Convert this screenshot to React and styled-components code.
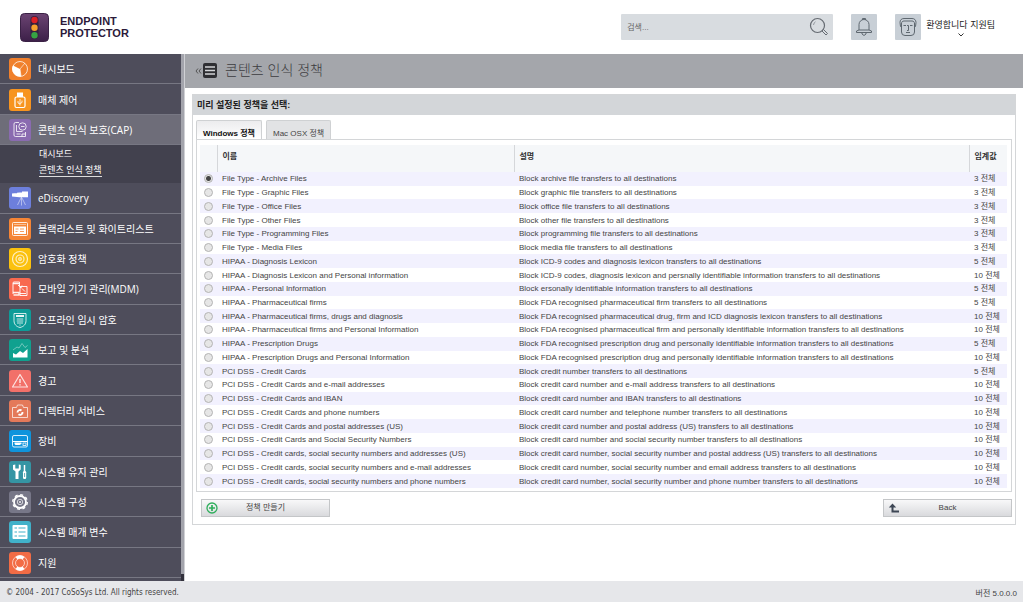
import React, { useState } from 'react'
import styled, { createGlobalStyle } from 'styled-components'

const sans = '"Liberation Sans", "Noto Sans CJK KR", sans-serif'
const menuFont = '"Open Sans", "Noto Sans CJK KR", sans-serif'

const GlobalStyle = createGlobalStyle`
	* { box-sizing: border-box; }
	body {
		margin: 0;
		background: #fff;
		color: #444;
		font-family: ${sans};
		font-size: 8px;
	}
	button, input { font-family: inherit; }
`

/* Menu icons, drawn on a 22 x 22 tile */
const icons = {
	dashboard: (
		<>
			<circle cx="11" cy="11" r="7.5" fill="none" stroke="#fff" strokeOpacity=".75" />
			<path d="M11 11 4 7.5A7.8 7.8 0 0 0 12 18.5Z" fill="#fff" />
			<path d="M11 11 16 5M11 11l1 7" stroke="#fff" strokeOpacity=".6" fill="none" />
		</>
	),
	device: (
		<>
			<path d="M8 3.5h6V8H8z" fill="#fff" />
			<rect x="6" y="8" width="10" height="10.5" rx="1.5" fill="none" stroke="#fff" strokeWidth="1.2" />
			<path d="M11 10v6.5M9 12v2l2 1M13 11.5v2l-2 1" fill="none" stroke="#fff" strokeWidth=".8" />
		</>
	),
	cap: (
		<g fill="none" stroke="#fff" strokeOpacity=".8">
			<path d="M10 3.5H6.5A1.5 1.5 0 0 0 5 5v11a1.5 1.5 0 0 0 1.5 1.5h10V13" />
			<circle cx="13.5" cy="7.5" r="3.7" />
			<path d="M12 7.5h3.5M7.5 6v6.5h6M7.5 15h4M13 17.5V15h3.5" />
		</g>
	),
	discovery: (
		<>
			<path d="M3 6.5 8 6v4L3 9.5zM8 5.7 13 5.2v5.2L8 9.9zM13 4.5h6v5.8h-6z" fill="#fff" />
			<path d="M12.5 10v8.5M12 11l-3.5 7M13 11l3.5 7" stroke="#fff" strokeOpacity=".6" strokeWidth=".8" />
		</>
	),
	lists: (
		<>
			<rect x="3.5" y="4.5" width="15" height="13" rx="1" fill="none" stroke="#fff" strokeOpacity=".85" />
			<path d="M5 8.5h12V16H5z" fill="#fff" />
			<path d="M6.5 11h3M11 11h4M6.5 13.5h2M11 13.5h4" stroke="#f7a063" />
			<path d="M5 6.5h12" stroke="#fff" strokeOpacity=".6" strokeWidth=".8" />
		</>
	),
	encryption: (
		<g fill="none" stroke="#fff" strokeOpacity=".75" strokeWidth="1.2">
			<circle cx="11" cy="11" r="7.5" />
			<circle cx="11" cy="11" r="4" />
			<circle cx="11" cy="11" r="1.3" />
		</g>
	),
	mobile: (
		<g fill="none" stroke="#fff" strokeOpacity=".9">
			<path d="M4 16V5a1 1 0 0 1 1-1h5.5v4" />
			<path d="M4 5.5h6.5M4 14.5h6V17H4.5" strokeWidth="1.4" />
			<path d="M11 8.5h7v9h-7z" />
			<path d="m9 7 3 3m0 0 1-2.5M11 15.5h6M13 10.5l3 3" />
		</g>
	),
	offline: (
		<>
			<path d="M5 4.5h12v7c0 4-2.5 6.2-6 7-3.5-.8-6-3-6-7z" fill="none" stroke="#fff" strokeOpacity=".8" />
			<path d="M7 6h8v2H7z" fill="#fff" fillOpacity=".9" />
			<path d="M7.5 10h7M7.5 12h7M8 14h6M9 9v6M11 9v8M13 9v6" stroke="#fff" strokeOpacity=".55" strokeWidth=".8" />
		</>
	),
	reports: (
		<>
			<path d="M4 18.5V14l3 1.5 4-3.5 3 2 4.5-4v8.5z" fill="#fff" />
			<path d="m4 11 4-3 2 1 3-4.5 3 4 2.5-2" fill="none" stroke="#fff" strokeOpacity=".5" strokeWidth=".8" />
		</>
	),
	alerts: (
		<>
			<path d="M11 4.5 18.5 17h-15z" fill="none" stroke="#fff" strokeOpacity=".8" strokeWidth="1.2" strokeLinejoin="round" />
			<path d="M11 9v4M11 14.3v1.2" stroke="#fff" strokeWidth="1.2" />
		</>
	),
	directory: (
		<>
			<path d="M3.5 7.5h4l1-2.5h5l1 2.5h4v10h-15z" fill="none" stroke="#fff" strokeOpacity=".7" strokeLinejoin="round" />
			<path d="M8.5 12.5a2.5 2.5 0 0 1 4-2M13.5 12a2.5 2.5 0 0 1-4 2.3" fill="none" stroke="#fff" strokeWidth="1.9" />
		</>
	),
	appliance: (
		<>
			<rect x="3.5" y="5.5" width="15" height="11.5" rx="1.5" fill="none" stroke="#fff" strokeOpacity=".85" />
			<path d="M4 11.5h14" stroke="#fff" />
			<path d="M5.5 12.5h7V14l-2 1h-4l-1-1z" fill="#fff" />
			<rect x="14" y="13" width="3" height="2.5" fill="none" stroke="#fff" strokeWidth=".8" />
		</>
	),
	maintenance: (
		<>
			<path d="M4 4v4.5l2.5 2V18h3v-7.5l2.2-2V4L9.8 3.5v4H6.3v-4z" fill="#fff" />
			<path d="M15.5 4v6" stroke="#fff" strokeWidth="1.5" />
			<rect x="14" y="10" width="3.2" height="8" rx="1.2" fill="#fff" />
			<path d="M15.6 12v4" stroke="#3595a4" strokeWidth=".8" />
		</>
	),
	config: (
		<g fill="none" stroke="#fff">
			<circle cx="11" cy="11" r="6" strokeWidth="1.8" />
			<circle cx="11" cy="11" r="7.3" strokeWidth="1.3" strokeDasharray="3 2.733" />
			<circle cx="11" cy="11" r="2.7" strokeOpacity=".7" />
			<circle cx="11" cy="11" r=".5" fill="#fff" />
		</g>
	),
	params: (
		<>
			<rect x="3.5" y="4" width="15" height="14" rx="1" fill="#fff" />
			<path d="M5.5 7H8M5.5 11H8M5.5 15H8M9.5 7h7M9.5 11h7M9.5 15h7" stroke="#41b1c9" strokeWidth="1.2" />
		</>
	),
	// the thick bands sit at the top and bottom of the ring
	support: (
		<g fill="none" stroke="#fff">
			<circle cx="11" cy="11" r="7.5" strokeOpacity=".8" strokeWidth=".8" />
			<circle cx="11" cy="11" r="4.5" strokeOpacity=".8" strokeWidth=".8" />
			<path d="M7.5 6.2a6 6 0 0 1 7 0M7.5 15.8a6 6 0 0 0 7 0" strokeWidth="3.2" />
		</g>
	),
}

const menu = [
	{ icon: 'dashboard', label: '대시보드', color: '#f0802c' },
	{ icon: 'device', label: '매체 제어', color: '#f7941f' },
	{ icon: 'cap', label: '콘텐츠 인식 보호(CAP)', color: '#8a6bb0', active: true },
	{ icon: 'discovery', label: 'eDiscovery', color: '#6d7fdc' },
	{ icon: 'lists', label: '블랙리스트 및 화이트리스트', color: '#f58536' },
	{ icon: 'encryption', label: '암호화 정책', color: '#fbc10e' },
	{ icon: 'mobile', label: '모바일 기기 관리(MDM)', color: '#f8694f' },
	{ icon: 'offline', label: '오프라인 임시 암호', color: '#0e9c98' },
	{ icon: 'reports', label: '보고 및 분석', color: '#10a18f' },
	{ icon: 'alerts', label: '경고', color: '#f27069' },
	{ icon: 'directory', label: '디렉터리 서비스', color: '#e4795a' },
	{ icon: 'appliance', label: '장비', color: '#0f94dc' },
	{ icon: 'maintenance', label: '시스템 유지 관리', color: '#3595a4' },
	{ icon: 'config', label: '시스템 구성', color: '#777788' },
	{ icon: 'params', label: '시스템 매개 변수', color: '#41b1c9' },
	{ icon: 'support', label: '지원', color: '#f26c45' },
]

const policies = [
	['File Type - Archive Files', 'Block archive file transfers to all destinations', 3],
	['File Type - Graphic Files', 'Block graphic file transfers to all destinations', 3],
	['File Type - Office Files', 'Block office file transfers to all destinations', 3],
	['File Type - Other Files', 'Block other file transfers to all destinations', 3],
	['File Type - Programming Files', 'Block programming file transfers to all destinations', 3],
	['File Type - Media Files', 'Block media file transfers to all destinations', 3],
	['HIPAA - Diagnosis Lexicon', 'Block ICD-9 codes and diagnosis lexicon transfers to all destinations', 5],
	['HIPAA - Diagnosis Lexicon and Personal information', 'Block ICD-9 codes, diagnosis lexicon and persnally identifiable information transfers to all destinations', 10],
	['HIPAA - Personal Information', 'Block ersonally identifiable information transfers to all destinations', 5],
	['HIPAA - Pharmaceutical firms', 'Block FDA recognised pharmaceutical firm transfers to all destinations', 5],
	['HIPAA - Pharmaceutical firms, drugs and diagnosis', 'Block FDA recognised pharmaceutical drug, firm and ICD diagnosis lexicon transfers to all destinations', 10],
	['HIPAA - Pharmaceutical firms and Personal Information', 'Block FDA recognised pharmaceutical firm and personally identifiable information transfers to all destinations', 10],
	['HIPAA - Prescription Drugs', 'Block FDA recognised prescription drug and personally identifiable information transfers to all destinations', 5],
	['HIPAA - Prescription Drugs and Personal Information', 'Block FDA recognised prescription drug and personally identifiable information transfers to all destinations', 10],
	['PCI DSS - Credit Cards', 'Block credit number transfers to all destinations', 5],
	['PCI DSS - Credit Cards and e-mail addresses', 'Block credit card number and e-mail address transfers to all destinations', 10],
	['PCI DSS - Credit Cards and IBAN', 'Block credit card number and IBAN transfers to all destinations', 10],
	['PCI DSS - Credit Cards and phone numbers', 'Block credit card number and telephone number transfers to all destinations', 10],
	['PCI DSS - Credit Cards and postal addresses (US)', 'Block credit card number and postal address (US) transfers to all destinations', 10],
	['PCI DSS - Credit Cards and Social Security Numbers', 'Block credit card number and social security number transfers to all destinations', 10],
	['PCI DSS - Credit cards, social security numbers and addresses (US)', 'Block credit card number, social security number and postal address (US) transfers to all destinations', 10],
	['PCI DSS - Credit cards, social security numbers and e-mail addresses', 'Block credit card number, social security number and email address transfers to all destinations', 10],
	['PCI DSS - Credit cards, social security numbers and phone numbers', 'Block credit card number, social security number and phone number transfers to all destinations', 10],
]

const Logo = () => (
	<svg width="29" height="29" viewBox="0 0 29 29" aria-hidden="true">
		<defs>
			<linearGradient id="logoFill" x1="0" y1="0" x2="0" y2="1">
				<stop offset="0" stopColor="#6b4472" />
				<stop offset="1" stopColor="#3c1f48" />
			</linearGradient>
		</defs>
		<rect x=".5" y=".5" width="28" height="28" rx="4" fill="url(#logoFill)" stroke="#3a2145" />
		<rect x="10.5" y="3" width="8" height="23" rx="4" fill="#35203f" />
		<circle cx="14.5" cy="7" r="3.2" fill="#dc1f26" />
		<circle cx="14.5" cy="14.7" r="3.2" fill="#f6a02d" />
		<circle cx="14.5" cy="22.3" r="3.2" fill="#36a343" />
	</svg>
)

const App = () => {
	const [tab, setTab] = useState('windows')
	const [selected, setSelected] = useState(0)

	return (
		<Page>
			<GlobalStyle />
			<Header>
				<Brand href="#">
					<Logo />
					<span>ENDPOINT<br />PROTECTOR</span>
				</Brand>
				<HeaderTools>
					<Search>
						<SearchInput type="text" placeholder="검색..." aria-label="검색" />
						<SearchButton aria-label="검색">
							<svg width="20" height="20" viewBox="0 0 20 20" fill="none" stroke="#666b72">
								<circle cx="8.5" cy="8.5" r="7" strokeWidth="1.2" />
								<path d="M4.500 8a4 4 0 0 1 2-3.200" strokeWidth=".6" />
								<path d="m13 14 1.500-1.500 4 4-1.500 1.500z" />
							</svg>
						</SearchButton>
					</Search>
					<IconButton aria-label="알림">
						<svg width="18" height="20" viewBox="0 0 18 20" fill="none" stroke="#5f6870">
							<path d="M7.5 3V1.500h3V3M4 13V7.500a5 5 0 0 1 10 0V13M1.500 15.500V14L4 13h10l2.500 1v1.500zM7 16v1l2 1.500 2-1.500v-1" strokeLinejoin="round" />
						</svg>
					</IconButton>
					<UserMenu>
						<Avatar>
							<svg width="20" height="20" viewBox="0 0 20 20" fill="none" stroke="#5f6870">
								<path d="M3.5 6v9A3.500 3.500 0 0 0 7 18.500h6a3.500 3.500 0 0 0 3.500-3.500V6" />
								<path d="M3.500 9.500H2.500L2 5.500c0-2.500 1.500-4 4-4h8c2.500 0 4 1.500 4 4l-.5 4h-1M3.500 6.500C3.500 5 4.500 4 6 4h8c1.500 0 2.500 1 2.500 2.500" />
								<path d="M5.500 8.500H8M12 8.500h2.500M9 8.500h1.500v5H9M8 15.500h4" />
							</svg>
						</Avatar>
						<UserName>
							환영합니다 지원팀
							<svg width="6" height="4" viewBox="0 0 6 4" fill="none" stroke="#333">
								<path d="m.5.5 2.500 2.500L5.500.5" />
							</svg>
						</UserName>
					</UserMenu>
				</HeaderTools>
			</Header>

			<Body>
				<Sidebar>
					{menu.map((item) => (
						<React.Fragment key={item.icon}>
							<MenuLink href="#" $active={item.active}>
								<Tile $color={item.color} viewBox="0 0 22 22" aria-hidden="true">{icons[item.icon]}</Tile>
								{item.label}
							</MenuLink>
							{item.active && (
								<SubMenu>
									<SubLink href="#">대시보드</SubLink>
									<SubLink href="#" $current>콘텐츠 인식 정책</SubLink>
								</SubMenu>
							)}
						</React.Fragment>
					))}
				</Sidebar>

				<Main>
					<TitleBar>
						<svg width="22" height="15" viewBox="0 0 22 15" aria-hidden="true">
							<path d="M3 5.500 1 8l2 2.500M6 5.500 4 8l2 2.500" fill="none" stroke="#555" />
							<rect x="8" width="14" height="15" rx="2" fill="#2f2f33" />
							<path d="M10 4h10M10 7.500h10M10 11h10" stroke="#d4d5d8" strokeWidth="1.500" />
						</svg>
						<Title>콘텐츠 인식 정책</Title>
					</TitleBar>

					<Panel>
						<PanelHead>미리 설정된 정책을 선택:</PanelHead>
						<PanelBody>
							<Tabs role="tablist">
								<Tab role="tab" aria-selected={tab === 'windows'} $active={tab === 'windows'} onClick={() => setTab('windows')}>
									Windows 정책
								</Tab>
								<Tab role="tab" aria-selected={tab === 'mac'} $active={tab === 'mac'} onClick={() => setTab('mac')}>
									Mac OSX 정책
								</Tab>
							</Tabs>
							<TabContent>
								<Table>
									<colgroup>
										<col style={{ width: 17 }} />
										<col style={{ width: 297 }} />
										<col />
										<col style={{ width: 38 }} />
									</colgroup>
									<thead>
										<tr>
											<HeadCell />
											<HeadCell>이름</HeadCell>
											<HeadCell>설명</HeadCell>
											<HeadCell>임계값</HeadCell>
										</tr>
									</thead>
									<tbody>
										{policies.map(([name, description, limit], i) => (
											<Row key={name}>
												<Cell $center>
													<Radio
														type="radio"
														name="policy"
														id={`policy-${i}`}
														checked={selected === i}
														onChange={() => setSelected(i)}
													/>
												</Cell>
												<Cell><label htmlFor={`policy-${i}`}>{name}</label></Cell>
												<Cell>{description}</Cell>
												<Cell>{limit} 전체</Cell>
											</Row>
										))}
									</tbody>
								</Table>
							</TabContent>
							<Actions>
								<ActionButton>
									<svg width="12" height="12" viewBox="0 0 12 12" fill="none" stroke="#2fae5c">
										<circle cx="6" cy="6" r="5" strokeWidth="1.3" />
										<path d="M6 3v6M3 6h6" strokeWidth="1.7" />
									</svg>
									<span>정책 만들기</span>
								</ActionButton>
								<ActionButton>
									<svg width="12" height="12" viewBox="0 0 12 12" fill="none" stroke="#3d4654">
										<path d="M4.500 4v5.500H11" strokeWidth="2" />
										<path d="M.8 5.500 4.500 1.500l3.700 4z" fill="#3d4654" stroke="none" />
									</svg>
									<span>Back</span>
								</ActionButton>
							</Actions>
						</PanelBody>
					</Panel>
				</Main>
			</Body>

			<Footer>
				<Copyright>© 2004 - 2017 CoSoSys Ltd. All rights reserved.</Copyright>
				<span>버전 5.0.0.0</span>
			</Footer>
		</Page>
	)
}

const Page = styled.div`
	display: flex;
	flex-direction: column;
	min-height: 100vh;
`

const Header = styled.header`
	display: flex;
	align-items: center;
	justify-content: space-between;
	height: 54px;
	padding: 0 28px 0 20px;
`

const Brand = styled.a`
	display: flex;
	align-items: center;
	gap: 11px;
	color: #2b1a3a;
	font-size: 11px;
	font-weight: bold;
	line-height: 12px;
	text-decoration: none;
`

const HeaderTools = styled.div`
	display: flex;
	align-items: center;
	gap: 18px;
`

const Search = styled.div`
	display: flex;
	align-items: center;
	width: 212px;
	height: 26px;
	padding: 0 4px 0 6px;
	background: #d8dce0;
	border-radius: 1px;
`

const SearchInput = styled.input`
	flex: 1;
	min-width: 0;
	padding: 0;
	border: 0;
	outline: 0;
	background: none;
	font-size: 8px;
	&::placeholder { color: #666; }
`

const SearchButton = styled.button`
	display: flex;
	padding: 0;
	border: 0;
	background: none;
`

const IconButton = styled.button`
	display: flex;
	align-items: center;
	justify-content: center;
	width: 26px;
	height: 26px;
	padding: 0;
	border: 0;
	border-radius: 1px;
	background: #c8cfd6;
`

const UserMenu = styled.button`
	display: flex;
	align-items: center;
	gap: 5px;
	padding: 0;
	border: 0;
	background: none;
`

const Avatar = styled.span`
	display: flex;
	align-items: center;
	justify-content: center;
	width: 26px;
	height: 26px;
	border-radius: 1px;
	background: #c8cfd6;
`

const UserName = styled.span`
	display: flex;
	flex-direction: column;
	align-items: center;
	gap: 2px;
	padding-top: 2px;
	color: #222;
	font-size: 9px;
	line-height: 12px;
`

const Body = styled.div`
	display: flex;
	flex: 1;
`

const Sidebar = styled.nav`
	display: flex;
	flex-direction: column;
	flex: none;
	width: 184px;
	padding: 0 3px 3px 0;
	background:
		linear-gradient(#a3a4ac, #a3a4ac) right top / 3px calc(100% - 7px) no-repeat,
		linear-gradient(#33323d, #33323d) right bottom / 3px 7px no-repeat,
		#4e4d5b;
	font-family: ${menuFont};
`

const MenuLink = styled.a`
	display: flex;
	flex: 1 0 26px;
	align-items: center;
	gap: 7px;
	padding: 1px 0 0 9px;
	border-bottom: 1px solid #777783;
	background: ${(props) => (props.$active ? '#6e6d79' : 'transparent')};
	color: #fff;
	font-size: 10px;
	line-height: 14px;
	text-decoration: none;
`

const Tile = styled.svg`
	width: 22px;
	height: 22px;
	border-radius: 3px;
	background: ${(props) => props.$color};
`

const SubMenu = styled.div`
	display: flex;
	flex-direction: column;
	align-items: flex-start;
	height: 38px;
	padding: 3px 0 0 39px;
	background: #42414e;
`

const SubLink = styled.a`
	margin-bottom: 3px;
	border-bottom: 1px solid ${(props) => (props.$current ? '#ddd' : 'transparent')};
	color: #fff;
	font-size: 9px;
	line-height: 12px;
	text-decoration: none;
`

const Main = styled.main`
	flex: 1;
	min-width: 0;
	border-left: 1px solid #d0d1d5;
`

const TitleBar = styled.div`
	display: flex;
	align-items: center;
	gap: 8px;
	height: 34px;
	padding: 0 0 2px 10px;
	background: #a4a6ab;
`

const Title = styled.h1`
	margin: 0;
	color: #3c3c3f;
	font-size: 14px;
	font-weight: 300;
	line-height: 20px;
`

const Panel = styled.section`
	margin: 6px 7px 0;
	border: 1px solid #d4d6d8;
`

const PanelHead = styled.h2`
	margin: 0;
	padding: 0 4px;
	background: #d3d6d9;
	color: #222;
	font-size: 9px;
	line-height: 20px;
`

const PanelBody = styled.div`
	padding: 5px 3px 7px;
`

const Tabs = styled.div`
	display: flex;
	gap: 4px;
`

const Tab = styled.button`
	height: 19px;
	padding: 4px 6px 0;
	border: 1px solid #cfd1d3;
	border-bottom: 0;
	border-radius: 2px 2px 0 0;
	background: ${(props) => (props.$active ? 'linear-gradient(#ececee, #fff)' : '#e2e3e5')};
	color: ${(props) => (props.$active ? '#111' : '#444')};
	font-size: 8px;
	font-weight: ${(props) => (props.$active ? 'bold' : 'normal')};
`

const TabContent = styled.div`
	padding: 5px 4px 3px 3px;
	border: 1px solid #d4d6d8;
`

// the rows share out what the header leaves of the height
const Table = styled.table`
	width: 100%;
	height: 343px;
	border-collapse: collapse;
	table-layout: fixed;
`

const HeadCell = styled.th`
	height: 27px;
	padding: 0 5px 6px;
	border: 1px solid #d5d7da;
	border-width: 0 1px 0 0;
	background: #f5f7f9;
	color: #333;
	font-size: 8px;
	text-align: left;
	&:last-child { border-right: 0; }
`

const Row = styled.tr`
	&:nth-child(odd) { background: #f2f1fe; }
`

const Cell = styled.td`
	padding: ${(props) => (props.$center ? '0' : '1px 5px 0')};
	overflow: hidden;
	color: #444;
	font-size: 8px;
	line-height: 12px;
	text-align: ${(props) => (props.$center ? 'center' : 'left')};
	white-space: nowrap;
`

const Radio = styled.input`
	display: block;
	width: 9px;
	height: 9px;
	margin: 0 auto;
	appearance: none;
	border: 1px solid #b4b4b4;
	border-radius: 50%;
	background: #e6e6e6;
	&:checked {
		background: radial-gradient(#444 0 2px, #e6e6e6 3px);
	}
`

const Actions = styled.div`
	display: flex;
	justify-content: space-between;
	margin-top: 7px;
	padding-left: 5px;
`

const ActionButton = styled.button`
	display: flex;
	align-items: center;
	width: 129px;
	height: 18px;
	padding: 0 16px 0 4px;
	border: 1px solid #c4c6c8;
	background: linear-gradient(#f8f8f9, #d9dadd);
	color: #444;
	font-size: 8px;
	line-height: 12px;
	span {
		flex: 1;
		text-align: center;
	}
`

const Footer = styled.footer`
	display: flex;
	align-items: center;
	justify-content: space-between;
	height: 21px;
	padding: 2px 6px 0;
	background: #e6e7ea;
	color: #444;
`

const Copyright = styled.span`
	font-family: "DejaVu Sans Condensed", "DejaVu Sans", sans-serif;
	font-size: 8px;
`

export default App
